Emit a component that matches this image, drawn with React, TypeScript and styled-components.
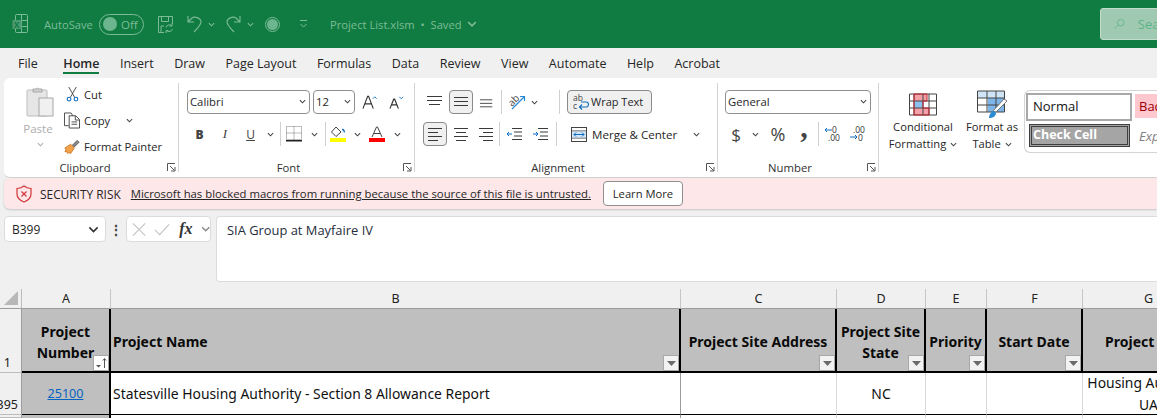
import React from "react";
import styled, { createGlobalStyle } from "styled-components";

const Global = createGlobalStyle`
  html, body { margin: 0; padding: 0; width: 1157px; height: 418px; overflow: hidden; background: #f0f0f0; }
  * { box-sizing: border-box; }
  body { font-family: "Open Sans", "Noto Sans", sans-serif; font-size: 11.2px; color: #262626; }
`;

const Page = styled.div`width: 1157px; height: 418px; overflow: hidden; display: flex; flex-direction: column;`;

/* ---- title bar ---- */
const TitleBar = styled.header`
  height: 48px; flex: none; background: #107c41; color: #7cbb98;
  display: flex; align-items: center; padding-left: 12px; font-size: 11.2px; white-space: nowrap;
`;
const TitleSlot = styled.div<{ $w: number }>`
  width: ${p => p.$w}px; flex: none; display: flex; align-items: center; height: 32px;
`;
const Toggle = styled.div`
  width: 45px; height: 21px; border: 1px solid #7cbb98; border-radius: 11px; display: flex; align-items: center;
  padding-left: 3px; gap: 4px; font-size: 11.5px;
  &::before { content: ""; width: 14px; height: 14px; border-radius: 50%; background: #6cb58e; }
`;
const SearchBox = styled.div`
  width: 80px; height: 32px; flex: none; background: #9fc9b1; border: 1px solid #c3dccd; border-radius: 3px;
  display: flex; align-items: center; padding-left: 13px; gap: 13px; color: #5cb585; font-size: 13px;
`;

/* ---- tabs ---- */
const Tabs = styled.nav`
  height: 30px; flex: none; display: flex; align-items: center; padding-left: 18px; gap: 20.5px; font-size: 12.5px; color: #303030;
`;
const Tab = styled.div<{ $on?: boolean; $first?: boolean }>`
  height: 30px; line-height: 31px; position: relative; color: #262626; white-space: nowrap;
  margin-right: ${p => (p.$first ? 5 : 0)}px;
  font-weight: ${p => (p.$on ? 600 : 400)};
  &::after { content: ""; display: ${p => (p.$on ? "block" : "none")}; position: absolute; left: 0; right: 0; bottom: 4px; height: 2px; background: #107c41; }
`;

/* ---- ribbon ---- */
const Ribbon = styled.section`
  height: 100px; flex: none; margin-left: 4px; background: #fff; border-radius: 6px 0 0 6px; display: flex;
  border-bottom: 1px solid #d2d2d2; overflow: hidden;
`;
const Group = styled.div<{ $w: number; $grow?: boolean }>`
  width: ${p => p.$w}px; flex: ${p => (p.$grow ? "1" : "none")}; position: relative; display: flex; flex-direction: column;
  &::after { content: ""; display: ${p => (p.$grow ? "none" : "block")}; position: absolute; right: 0; top: 5px; bottom: 5px; width: 1px; background: #d4d4d4; }
`;
const GroupBody = styled.div<{ $pl: number }>`
  height: 74px; padding: 12px 0 0 ${p => p.$pl}px; display: flex; flex-direction: column; gap: 8px; flex: none;
`;
const Caption = styled.div<{ $pr?: number }>`
  text-align: center; font-size: 11.3px; line-height: 16px; margin-top: 8px; padding-right: ${p => p.$pr ?? 17}px; color: #303030;
`;
const Launcher = styled.svg`position: absolute; right: 3px; bottom: 5px;`;
const Row = styled.div`display: flex; align-items: center; height: 24px; flex: none;`;
const Slot = styled.div<{ $w: number; $on?: boolean }>`
  width: ${p => p.$w}px; height: 24px; flex: none; display: flex; align-items: center; justify-content: center;
  ${p => p.$on ? "background:#f0f0f0;border:1px solid #8a8a8a;border-radius:4px;" : ""}
`;
const VSep = styled.div<{ $mx?: number }>`
  width: 1px; height: 24px; flex: none; background: #d0d0d0; margin: 0 ${p => p.$mx ?? 0}px;
`;
const Combo = styled.div<{ $w: number }>`
  width: ${p => p.$w}px; height: 24px; flex: none; border: 1px solid #8f8f8f; border-radius: 4px; padding: 0 3px 1px 2px;
  display: flex; align-items: center; justify-content: space-between; font-size: 11.3px; color: #262626;
`;
const ClipWrap = styled.div`display: flex; height: 74px; flex: none; padding: 3px 0 0 12px;`;
const PasteCol = styled.div`
  width: 48px; flex: none; display: flex; flex-direction: column; align-items: center; color: #adadad; font-size: 11.5px; line-height: 16px; padding-top: 5px;
  span { margin-top: 3px; margin-bottom: 4px; margin-right: 4px; }
  svg { flex: none; }
`;
const ClipList = styled.div`display: flex; flex-direction: column;`;
const ClipRow = styled.div`display: flex; flex: none; align-items: center; height: 26px; gap: 4px; font-size: 11.2px; white-space: nowrap;`;
const ClipIcon = styled.div`width: 16px; display: flex; justify-content: center;`;
const CopyChev = styled.span`margin-left: 12px; display: flex;`;
const WrapBtn = styled.div`
  width: 85px; height: 24px; background: #f0f0f0; border: 1px solid #8a8a8a; border-radius: 4px; display: flex; align-items: center;
  gap: 2px; padding: 0 0 1px 5px; font-size: 11px; margin-left: 7px; flex: none; white-space: nowrap;
`;
const MergeBtn = styled.div`
  width: 137px; height: 24px; display: flex; align-items: center; gap: 5px; padding-left: 4px; font-size: 11.6px; margin-left: 10px; flex: none; white-space: nowrap;
`;
const MergeChev = styled.span`margin-left: 11px; display: flex;`;
const StylesBody = styled.div`display: flex; padding-top: 12px; height: 74px;`;
const BigBtn = styled.div<{ $w: number }>`
  width: ${p => p.$w}px; flex: none; display: flex; flex-direction: column; align-items: center; text-align: center;
  font-size: 11.2px; line-height: 17px; white-space: nowrap;
  svg.big { margin-bottom: -2.5px; flex: none; }
`;
const BigLabel = styled.div`flex: none; svg { margin-left: 1px; }`;
const Gallery = styled.div`
  flex: 1; height: 63px; border: 1px solid #d4d4d4; border-right: 0; border-radius: 6px 0 0 6px; padding: 2px 0 0 1px;
  display: grid; grid-template-columns: 106px 1fr; grid-template-rows: 28px 24px; row-gap: 3px; column-gap: 3px;
`;
const NormalCell = styled.div`
  border: 2px solid #a8a8a8; background: #fff; font-size: 13px; color: #111; line-height: 23px; padding-left: 5px;
`;
const BadCell = styled.div`
  background: #ffc7ce; color: #9c0006; font-size: 13px; line-height: 24px; padding-left: 4px; height: 24px; margin-top: 1px; overflow: hidden;
`;
const CheckCell = styled.div`
  background: #a5a5a5; border: 3px double #3f3f3f; color: #fff; font-weight: 700; font-size: 12.5px; line-height: 16px; padding-left: 1px;
  margin: 0 2px 0 3px; height: 23px;
`;
const ExpCell = styled.div`color: #7f7f7f; font-style: italic; font-size: 13px; line-height: 24px; padding-left: 4px;`;

/* ---- message bar ---- */
const MsgBar = styled.div`
  height: 31px; flex: none; margin-left: 4px; background: #fde7e9; border-radius: 6px 0 0 6px; display: flex; align-items: center;
  padding-left: 12px; font-size: 11.33px; color: #262626; white-space: nowrap; box-shadow: 0 1px 2px rgba(0,0,0,.18);
`;
const MsgTitle = styled.span`margin: 0 10px 0 8px; font-size: 11.9px;`;
const MsgLink = styled.span`text-decoration: underline;`;
const LearnBtn = styled.div`
  margin-left: 12px; width: 80px; height: 25px; border: 1px solid #8f8f8f; background: #fff; border-radius: 4px; display: flex; align-items: center; justify-content: center; font-size: 11.2px;
`;

/* ---- formula bar ---- */
const FormulaArea = styled.div`display: flex; height: 66px; flex: none; margin-top: 7px; padding-left: 4px; align-items: flex-start;`;
const NameBox = styled.div`
  width: 102px; height: 26px; background: #fff; border: 1px solid #dcdcdc; border-radius: 4px; display: flex; align-items: center; justify-content: space-between;
  padding: 0 6px 0 7px; font-size: 12px; flex: none;
`;
const Dots = styled.div`width: 20px; height: 26px; flex: none; display: flex; align-items: center; justify-content: center; font-weight: 700; font-size: 14px; color: #444;`;
const FxBox = styled.div`
  width: 85px; height: 26px; background: #fff; border: 1px solid #dcdcdc; border-radius: 4px; display: flex; align-items: center; gap: 8px; padding-left: 5px; flex: none;
`;
const FxText = styled.span`font-family: "Liberation Serif", serif; font-style: italic; font-weight: 700; font-size: 16px; color: #333; margin-left: 1px;`;
const FormulaInput = styled.div`
  flex: 1; margin-left: 5px; height: 66px; background: #fff; border: 1px solid #dcdcdc; border-right: 0; border-radius: 4px 0 0 4px; padding: 4px 0 0 10px;
  font-size: 12.9px; line-height: 18px; color: #1f2d3d;
`;

/* ---- sheet ---- */
const Sheet = styled.div`
  flex: none; margin-top: 7px; display: grid; font-family: "Noto Sans", sans-serif;
  grid-template-columns: 22px 89px 570px 156px 89px 61px 96px 132px;
  grid-template-rows: 20px 64px 42px 3px;
`;
const Corner = styled.div`
  background: #f0f0f0; border-right: 1px solid #bcbcbc; border-bottom: 1px solid #9c9c9c; display: flex; align-items: flex-end; justify-content: flex-end; padding: 0 3px 3px 0;
`;
const ColHead = styled.div`
  background: #f0f0f0; border-right: 1px solid #c6c6c6; border-bottom: 1px solid #9c9c9c; text-align: center; font-size: 12.5px; line-height: 20px; color: #222;
`;
const RowHead = styled.div<{ $pr: number }>`
  background: #f0f0f0; border-right: 1px solid #9c9c9c; border-bottom: 1px solid #bcbcbc; display: flex; align-items: flex-end; justify-content: flex-end;
  padding-right: ${p => p.$pr}px; font-size: 12.5px; line-height: 18px; color: #222; overflow: hidden; white-space: nowrap;
`;
const HeadCell = styled.div<{ $left?: boolean; $nowrap?: boolean }>`
  background: #bfbfbf; border-right: 2px solid #000; border-bottom: 2px solid #000; position: relative; display: flex; align-items: center;
  justify-content: ${p => (p.$left ? "flex-start" : "center")}; text-align: ${p => (p.$left ? "left" : "center")};
  padding: 3px ${p => (p.$left ? "3px" : "0")} 0 ${p => (p.$left ? "2px" : "0")}; font-weight: 700; font-size: 14px; line-height: 21px; color: #0a0a0a;
  white-space: ${p => (p.$nowrap ? "nowrap" : "pre-line")};
`;
const DataCell = styled.div<{ $line?: string; $grey?: boolean; $left?: boolean }>`
  background: ${p => (p.$grey ? "#bfbfbf" : "#fff")}; border-right: ${p => p.$line ?? "1px solid #d9d9d9"}; border-bottom: 1px solid #000;
  display: flex; align-items: center; justify-content: ${p => (p.$left ? "flex-start" : "center")}; padding: 0 ${p => (p.$left ? "2px" : "0")};
  font-size: 13.9px; line-height: 22px; color: #111; white-space: nowrap; overflow: hidden;
`;
const TailCell = styled.div<{ $line?: string; $grey?: boolean }>`
  background: ${p => (p.$grey ? "#bfbfbf" : "#fff")}; border-right: ${p => p.$line ?? "1px solid #d9d9d9"};
`;
const LinkText = styled.span`color: #0563c1; text-decoration: underline; font-size: 12.6px;`;
const WrapClip = styled.div`width: 100%; white-space: nowrap; text-align: center;`;
const FilterBtn = styled.div<{ $sort?: boolean }>`
  position: absolute; right: 0; bottom: 0; width: 16px; height: 16px; background: ${p => (p.$sort ? "#fff" : "#f2f2f2")}; border: 1px solid #a8a8a8; display: flex; align-items: center; justify-content: center;
`;

/* ---- icons ---- */
const Chev: React.FC<{ c?: string; s?: number }> = ({ c = "#444", s = 7 }) => (
  <svg width={s} height={s} viewBox="0 0 8 8"><path d="M1 2.5 L4 5.5 L7 2.5" fill="none" stroke={c} strokeWidth="1.2" /></svg>
);
const Lines: React.FC<{ rows: [number, number, number][]; w?: number; h?: number }> = ({ rows, w = 16, h = 14 }) => (
  <svg width={w} height={h} viewBox={`0 0 ${w} ${h}`}>{rows.map((r, i) => <rect key={i} x={r[0]} y={r[2]} width={r[1]} height="1" fill="#3a3a3a" />)}</svg>
);
const LaunchIcon = () => (
  <Launcher width="9" height="9" viewBox="0 0 9 9"><path d="M.5 8V.5H8M3 3l4.500 4.500M8 4v4H4" fill="none" stroke="#555" strokeWidth="1" /></Launcher>
);
const Sort = () => (
  <svg width="14" height="12" viewBox="0 0 14 12"><path d="M2 8h5l-2.500 2.500z" fill="#555" /><path d="M10.500 11V2M8.800 3.500 10.500 1.500 12.200 3.500" fill="none" stroke="#555" /></svg>
);
const Tri = () => (<svg width="9" height="5" viewBox="0 0 9 5"><path d="M0 0h9L4.500 5z" fill="#6a6a6a" /></svg>);

const ExcelLogo = () => (
  <svg width="16" height="20" viewBox="0 0 16 20" fill="none" stroke="#7cbb98">
    <rect x="3.500" y=".5" width="12" height="18" rx="1" /><path d="M9.500 .5v18M3.500 6.500h12M9.500 12.500h6" />
    <rect x=".5" y="6" width="9" height="9" fill="#4d9a72" stroke="none" /><text x="2" y="13.500" fontSize="8" fontFamily="Open Sans" fill="#107c41" stroke="none" fontWeight="700">X</text>
  </svg>
);
const SaveIco = () => (
  <svg width="17" height="19" viewBox="0 0 17 19" fill="none" stroke="#7cbb98"><path d="M7 17.500H1.500V1.500h14V9M4.500 1.500v5h7v-5M4 17v-6h3" /><path d="M9 12.500a3.500 3.500 0 0 1 6-1.500M15.500 14a3.500 3.500 0 0 1-6 1.500M15 8.500V11h-2.500M9 18v-2.500h2.500" /></svg>
);
const Undo = () => (
  <svg width="15" height="18" viewBox="0 0 15 18" fill="none" stroke="#7cbb98" strokeWidth="1.1"><path d="M1 1v6h6M1 7l4-4c3-2 8 0 9 3 .5 3-2 6-7 11" /></svg>
);
const Redo = () => (
  <svg width="15" height="18" viewBox="0 0 15 18" fill="none" stroke="#7cbb98" strokeWidth="1.1"><path d="M14 1v6H8M14 7l-4-4C7 1 2 3 1 6c-.5 3 2 6 7 11" /></svg>
);
const Touch = () => (
  <svg width="15" height="15" viewBox="0 0 15 15"><circle cx="7.500" cy="7.500" r="7" fill="none" stroke="#7cbb98" /><circle cx="7.500" cy="7.500" r="5.500" fill="#6cb58e" /></svg>
);
const Customize = () => (
  <svg width="7" height="8" viewBox="0 0 7 8" fill="none" stroke="#7cbb98"><path d="M0 .5h7M.5 4 3.500 7 6.500 4" /></svg>
);
const SearchIco = () => (
  <svg width="16" height="16" viewBox="0 0 16 16" fill="none" stroke="#5cb585" strokeWidth="1.2"><circle cx="10" cy="6" r="4.800" /><path d="M6.500 9.500 1 15" /></svg>
);
const PasteIco = () => (
  <svg width="28" height="32" viewBox="0 0 28 32">
    <rect x="1" y="4" width="20" height="26" rx="1" fill="#e6e6e6" stroke="#bdbdbd" /><path d="M7 6V3h3a2 2 0 0 1 3 0h3v3z" fill="#cfcfcf" stroke="#a8a8a8" />
    <rect x="13" y="12" width="14" height="18" fill="#f0f0f0" stroke="#a8a8a8" />
  </svg>
);
const Scissors = () => (
  <svg width="13" height="16" viewBox="0 0 14 17" fill="none"><path d="M3 1l6.500 11.500M11 1 4.500 12.500" stroke="#444" /><circle cx="3.300" cy="14" r="2" stroke="#0f6cbd" strokeWidth="1.200" /><circle cx="10.700" cy="14" r="2" stroke="#0f6cbd" strokeWidth="1.200" /></svg>
);
const CopyIco = () => (
  <svg width="17" height="17" viewBox="0 0 17 17" fill="none" stroke="#444"><path d="M5 14H.5V.5h7l2 3" /><path d="M5.500 3.500h7l4 4v9h-11zM12 3.500V8h4.500M8 10h6M8 12.500h6" /></svg>
);
const Brush = () => (
  <svg width="17" height="17" viewBox="0 0 17 17"><path d="M1 10 7 6l4 4-4 6-2-1-1 1-1-2-2 0 1-2z" fill="#f2a24a" stroke="#c56a12" strokeWidth=".8" /><path d="M9 7l5-5 2 2-5 5z" fill="#8a8a8a" stroke="#444" strokeWidth=".8" /></svg>
);
const Grow = ({ up }: { up: boolean }) => (
  <svg width="17" height="16" viewBox="0 0 17 16">
    <path d={up ? "M1 15 6 2h1l5 13M3 10h7" : "M1 15 5 5h1l4 10M2.800 11h5.500"} fill="none" stroke="#333" strokeWidth="1.200" />
    <path d={up ? "M11.500 4.500 13.500 2.500 15.500 4.500" : "M11 2.500 13 4.500 15 2.500"} fill="none" stroke="#0f6cbd" />
  </svg>
);
const Bee = styled.span<{ $b?: boolean; $i?: boolean; $u?: boolean }>`
  font-family: "Liberation Serif", serif; font-size: 13px; color: #444;
  ${p => p.$b ? 'font-family:"Open Sans",sans-serif;font-weight:800;font-size:12px;' : ""}
  ${p => p.$i ? 'font-style:italic;font-size:13px;' : ""}
  ${p => p.$u ? 'font-family:"Open Sans",sans-serif;text-decoration:underline;font-size:12px;' : ""}
`;
const Borders = () => (
  <svg width="16" height="16" viewBox="0 0 16 16" fill="none"><path d="M.5.5h15v13H.5zM8 .5v13M.5 7h15" stroke="#777" strokeDasharray="1 1" /><rect x="0" y="14" width="16" height="1.500" fill="#222" /></svg>
);
const FillIco = () => (
  <svg width="16" height="16" viewBox="0 0 16 16"><path d="M6 1 1.500 6 6 10.500 11 6z" fill="none" stroke="#444" /><path d="M12 3.500a2 2 0 0 1 2 3" fill="none" stroke="#0f6cbd" strokeWidth="1.300" /><rect y="12" width="16" height="4" fill="#ffff00" /></svg>
);
const FontColor = () => (
  <svg width="16" height="16" viewBox="0 0 16 16"><path d="M3 11 7.500 1h1L13 11M5 7.500h6" fill="none" stroke="#444" /><rect y="12" width="16" height="4" fill="#ff0000" /></svg>
);
const Orient = () => (
  <svg width="18" height="18" viewBox="0 0 18 18"><text x="0" y="11" transform="rotate(-45 5 9)" fontSize="10" fontFamily="Open Sans" fill="#444">ab</text><path d="M3 16 15 4M11 3.500h4.500V8" fill="none" stroke="#2a8ad4" strokeWidth="1.200" /></svg>
);
const Indent = ({ inc }: { inc: boolean }) => (
  <svg width="15" height="14" viewBox="0 0 15 14">
    <path d="M5 1.500h10M7 5h8M7 9h8M5 12.500h10" stroke="#3a3a3a" fill="none" />
    <path d={inc ? "M0 7h5M3 5l2 2-2 2" : "M5 7H0M2 5 0 7l2 2"} stroke="#0f6cbd" fill="none" />
  </svg>
);
const WrapIco = () => (
  <svg width="16" height="16" viewBox="0 0 16 16"><text x="0" y="7" fontSize="8.500" fontFamily="Open Sans" fill="#444">ab</text><text x="0" y="15" fontSize="8.500" fontFamily="Open Sans" fill="#444">c</text><path d="M8 8h5a2 2 0 0 1 0 5H7M9 10.500 6.500 13 9 15.500" fill="none" stroke="#0f6cbd" strokeWidth="1.100" /></svg>
);
const MergeIco = () => (
  <svg width="16" height="15" viewBox="0 0 16 15" fill="none"><rect x=".5" y=".5" width="15" height="14" stroke="#444" /><path d="M.5 4h15M.5 11h15" stroke="#444" /><rect x="1" y="4.500" width="14" height="6" fill="#cfe4f7" /><path d="M3 7.500h10M5 5.500l-2 2 2 2M11 5.500l2 2-2 2" stroke="#0f6cbd" /></svg>
);
const Comma = styled.span`font-family: "Liberation Serif", serif; font-weight: 700; font-size: 30px; line-height: 10px; color: #444; margin-top: -14px;`;
const Dollar = styled.span`font-size: 17px; color: #444; font-weight: 400;`;
const Pct = styled.span`font-size: 18px; color: #444;`;
const Dec = ({ inc }: { inc: boolean }) => (
  <svg width="16" height="16" viewBox="0 0 16 16">
    <text x={inc ? 3 : 7} y="7" fontSize="8.500" fontFamily="Open Sans" fill="#333">{inc ? ".00" : "0"}</text>
    <text x={inc ? 8 : 3} y="15" fontSize="8.500" fontFamily="Open Sans" fill="#333">{inc ? "0" : ".00"}</text>
    <path d={inc ? "M0 11h7M5 9l2 2-2 2" : "M7 4H0M2 2 0 4l2 2"} stroke="#0f6cbd" fill="none" />
  </svg>
);
const CondIco = () => (
  <svg className="big" width="28" height="30" viewBox="0 0 28 24">
    <rect x="5" y="1" width="13" height="7" fill="#f4a0a8" /><rect x="5" y="8" width="9" height="7" fill="#8cc0ee" /><rect x="5" y="15" width="15" height="7" fill="#f4a0a8" />
    <path d="M.5 1h27v21H.5zM.5 8h27M.5 15h27M5 1v21M14 1v21M20 1v21" fill="none" stroke="#444" /><path d="M5 1h13v7h-4v7h6v7H5z" fill="none" stroke="#c8222f" />
  </svg>
);
const TableIco = () => (
  <svg className="big" width="31" height="30" viewBox="0 0 31 30">
    <rect x="1" y="1" width="27" height="7" fill="#cfe4f7" /><rect x="11" y="8" width="17" height="14" fill="#7fb6ea" />
    <path d="M.5 1h27v21H.5zM.5 8h27M.5 15h27M10 1v21M19 1v21" fill="none" stroke="#444" />
    <path d="M16 21 27 9l3 2-11 11z" fill="#fff" stroke="#777" /><path d="M12 28c0-4 3-7 5-7l2 2c0 3-3 5-7 5z" fill="#2a8ad4" />
  </svg>
);
const ShieldIco = () => (
  <svg width="16" height="18" viewBox="0 0 16 18" fill="none"><path d="M8 1c2 1.600 4 2.300 7 2.500V9c0 4-3 6.500-7 8-4-1.500-7-4-7-8V3.500C4 3.300 6 2.600 8 1z" stroke="#d13438" strokeWidth="1.200" /><path d="M5.500 6.500l5 5M10.500 6.500l-5 5" stroke="#d13438" strokeWidth="1.100" /></svg>
);
const XIco = () => (<svg width="15" height="15" viewBox="0 0 15 15"><path d="M1 1l13 13M14 1 1 14" stroke="#c4c4c4" strokeWidth="1.200" /></svg>);
const CheckIco = () => (<svg width="17" height="13" viewBox="0 0 17 13"><path d="M1 7l5 5L16 1" fill="none" stroke="#c4c4c4" strokeWidth="1.200" /></svg>);

const heads = ["Project Site Address", "Project Site\nState", "Priority", "Start Date"];

export default function App() {
  return (
    <Page>
      <Global />
      <TitleBar>
        <TitleSlot $w={32}><ExcelLogo /></TitleSlot>
        <TitleSlot $w={55}>AutoSave</TitleSlot>
        <TitleSlot $w={58}><Toggle>Off</Toggle></TitleSlot>
        <TitleSlot $w={30}><SaveIco /></TitleSlot>
        <TitleSlot $w={21}><Undo /></TitleSlot>
        <TitleSlot $w={18}><Chev c="#7cbb98" /></TitleSlot>
        <TitleSlot $w={21}><Redo /></TitleSlot>
        <TitleSlot $w={18}><Chev c="#7cbb98" /></TitleSlot>
        <TitleSlot $w={35}><Touch /></TitleSlot>
        <TitleSlot $w={30}><Customize /></TitleSlot>
        <TitleSlot $w={770}>Project List.xlsm&nbsp;&nbsp;•&nbsp;&nbsp;Saved&nbsp;&nbsp;<Chev c="#7cbb98" s={10} /></TitleSlot>
        <SearchBox><SearchIco />Search</SearchBox>
      </TitleBar>

      <Tabs>
        {["File", "Home", "Insert", "Draw", "Page Layout", "Formulas", "Data", "Review", "View", "Automate", "Help", "Acrobat"].map(t => (
          <Tab key={t} $on={t === "Home"} $first={t === "File"}>{t}</Tab>
        ))}
      </Tabs>

      <Ribbon>
        <Group $w={175}>
          <ClipWrap>
            <PasteCol><PasteIco /><span>Paste</span><Chev c="#adadad" /></PasteCol>
            <ClipList>
              <ClipRow><ClipIcon><Scissors /></ClipIcon>Cut</ClipRow>
              <ClipRow><ClipIcon><CopyIco /></ClipIcon>Copy<CopyChev><Chev /></CopyChev></ClipRow>
              <ClipRow><ClipIcon><Brush /></ClipIcon>Format Painter</ClipRow>
            </ClipList>
          </ClipWrap>
          <Caption $pr={13}>Clipboard</Caption>
          <LaunchIcon />
        </Group>
        <Group $w={236}>
          <GroupBody $pl={8}>
            <Row>
              <Combo $w={123}>Calibri<Chev /></Combo>
              <Slot $w={3} />
              <Combo $w={42}>12<Chev /></Combo>
              <Slot $w={7} />
              <Slot $w={16}><Grow up /></Slot>
              <Slot $w={11} />
              <Slot $w={16}><Grow up={false} /></Slot>
            </Row>
            <Row>
              <Slot $w={25}><Bee $b>B</Bee></Slot>
              <Slot $w={26}><Bee $i>I</Bee></Slot>
              <Slot $w={25}><Bee $u>U</Bee></Slot>
              <Slot $w={15}><Chev /></Slot>
              <VSep $mx={2} />
              <Slot $w={22}><Borders /></Slot>
              <Slot $w={18}><Chev /></Slot>
              <VSep $mx={2} />
              <Slot $w={20}><FillIco /></Slot>
              <Slot $w={18}><Chev /></Slot>
              <Slot $w={22}><FontColor /></Slot>
              <Slot $w={18}><Chev /></Slot>
            </Row>
          </GroupBody>
          <Caption>Font</Caption>
          <LaunchIcon />
        </Group>
        <Group $w={303}>
          <GroupBody $pl={8}>
            <Row>
              <Slot $w={24}><Lines rows={[[0, 15, 1], [0, 15, 5], [2, 11, 9]]} /></Slot>
              <Slot $w={2} />
              <Slot $w={24} $on><Lines rows={[[1, 14, 2], [1, 14, 6], [1, 14, 10]]} /></Slot>
              <Slot $w={7} />
              <Slot $w={14}><Lines rows={[[0, 14, 4], [0, 14, 8], [0, 14, 12]]} /></Slot>
              <VSep $mx={7} />
              <Slot $w={18}><Orient /></Slot>
              <Slot $w={14}><Chev /></Slot>
              <Slot $w={18} />
              <VSep />
              <WrapBtn><WrapIco />Wrap Text</WrapBtn>
            </Row>
            <Row>
              <Slot $w={24} $on><Lines rows={[[1, 14, 1], [1, 10, 5], [1, 14, 9], [1, 10, 13]]} /></Slot>
              <Slot $w={5} />
              <Slot $w={18}><Lines rows={[[1, 14, 1], [3, 10, 5], [1, 14, 9], [3, 10, 13]]} /></Slot>
              <Slot $w={7} />
              <Slot $w={17}><Lines rows={[[1, 14, 1], [5, 10, 5], [1, 14, 9], [5, 10, 13]]} /></Slot>
              <VSep $mx={5} />
              <Slot $w={18}><Indent inc={false} /></Slot>
              <Slot $w={8} />
              <Slot $w={18}><Indent inc /></Slot>
              <Slot $w={7} />
              <VSep />
              <MergeBtn><MergeIco />Merge &amp; Center<MergeChev><Chev /></MergeChev></MergeBtn>
            </Row>
          </GroupBody>
          <Caption>Alignment</Caption>
          <LaunchIcon />
        </Group>
        <Group $w={161}>
          <GroupBody $pl={7}>
            <Row><Combo $w={146}>General<Chev /></Combo></Row>
            <Row>
              <Slot $w={22}><Dollar>$</Dollar></Slot>
              <Slot $w={16}><Chev /></Slot>
              <Slot $w={30}><Pct>%</Pct></Slot>
              <Slot $w={22}><Comma>,</Comma></Slot>
              <VSep $mx={3} />
              <Slot $w={22}><Dec inc={false} /></Slot>
              <Slot $w={3} />
              <Slot $w={22}><Dec inc /></Slot>
            </Row>
          </GroupBody>
          <Caption>Number</Caption>
          <LaunchIcon />
        </Group>
        <Group $w={275} $grow>
          <StylesBody>
            <BigBtn $w={88}><CondIco /><BigLabel>Conditional<br />Formatting <Chev /></BigLabel></BigBtn>
            <BigBtn $w={50}><TableIco /><BigLabel>Format as<br />Table <Chev /></BigLabel></BigBtn>
            <Slot $w={7} />
            <Gallery>
              <NormalCell>Normal</NormalCell>
              <BadCell>Bad</BadCell>
              <CheckCell>Check Cell</CheckCell>
              <ExpCell>Explanatory</ExpCell>
            </Gallery>
          </StylesBody>
        </Group>
      </Ribbon>

      <MsgBar>
        <ShieldIco />
        <MsgTitle>SECURITY RISK</MsgTitle>
        <MsgLink>Microsoft has blocked macros from running because the source of this file is untrusted.</MsgLink>
        <LearnBtn>Learn More</LearnBtn>
      </MsgBar>

      <FormulaArea>
        <NameBox>B399<Chev c="#333" s={11} /></NameBox>
        <Dots>⋮</Dots>
        <FxBox><XIco /><CheckIco /><FxText>fx</FxText><Chev c="#888" s={10} /></FxBox>
        <FormulaInput>SIA Group at Mayfaire IV</FormulaInput>
      </FormulaArea>

      <Sheet>
        <Corner><svg width="14" height="14" viewBox="0 0 14 14"><path d="M14 0v14H0z" fill="#b8b8b8" /></svg></Corner>
        {["A", "B", "C", "D", "E", "F", "G"].map(c => <ColHead key={c}>{c}</ColHead>)}

        <RowHead $pr={10}>1</RowHead>
        <HeadCell>{"Project\nNumber"}<FilterBtn $sort><Sort /></FilterBtn></HeadCell>
        <HeadCell $left>Project Name<FilterBtn><Tri /></FilterBtn></HeadCell>
        {heads.map(h => <HeadCell key={h}>{h}<FilterBtn><Tri /></FilterBtn></HeadCell>)}
        <HeadCell $nowrap>Project Type</HeadCell>

        <RowHead $pr={3}>395</RowHead>
        <DataCell $grey $line="2px solid #000"><LinkText>25100</LinkText></DataCell>
        <DataCell $left $line="1px solid #9c9c9c">Statesville Housing Authority - Section 8 Allowance Report</DataCell>
        <DataCell />
        <DataCell>NC</DataCell>
        <DataCell />
        <DataCell />
        <DataCell><WrapClip>Housing Authority,<br />UA</WrapClip></DataCell>

        <RowHead $pr={3} />
        <TailCell $grey $line="2px solid #000" />
        <TailCell $line="1px solid #9c9c9c" />
        <TailCell /><TailCell /><TailCell /><TailCell /><TailCell />
      </Sheet>
    </Page>
  );
}
